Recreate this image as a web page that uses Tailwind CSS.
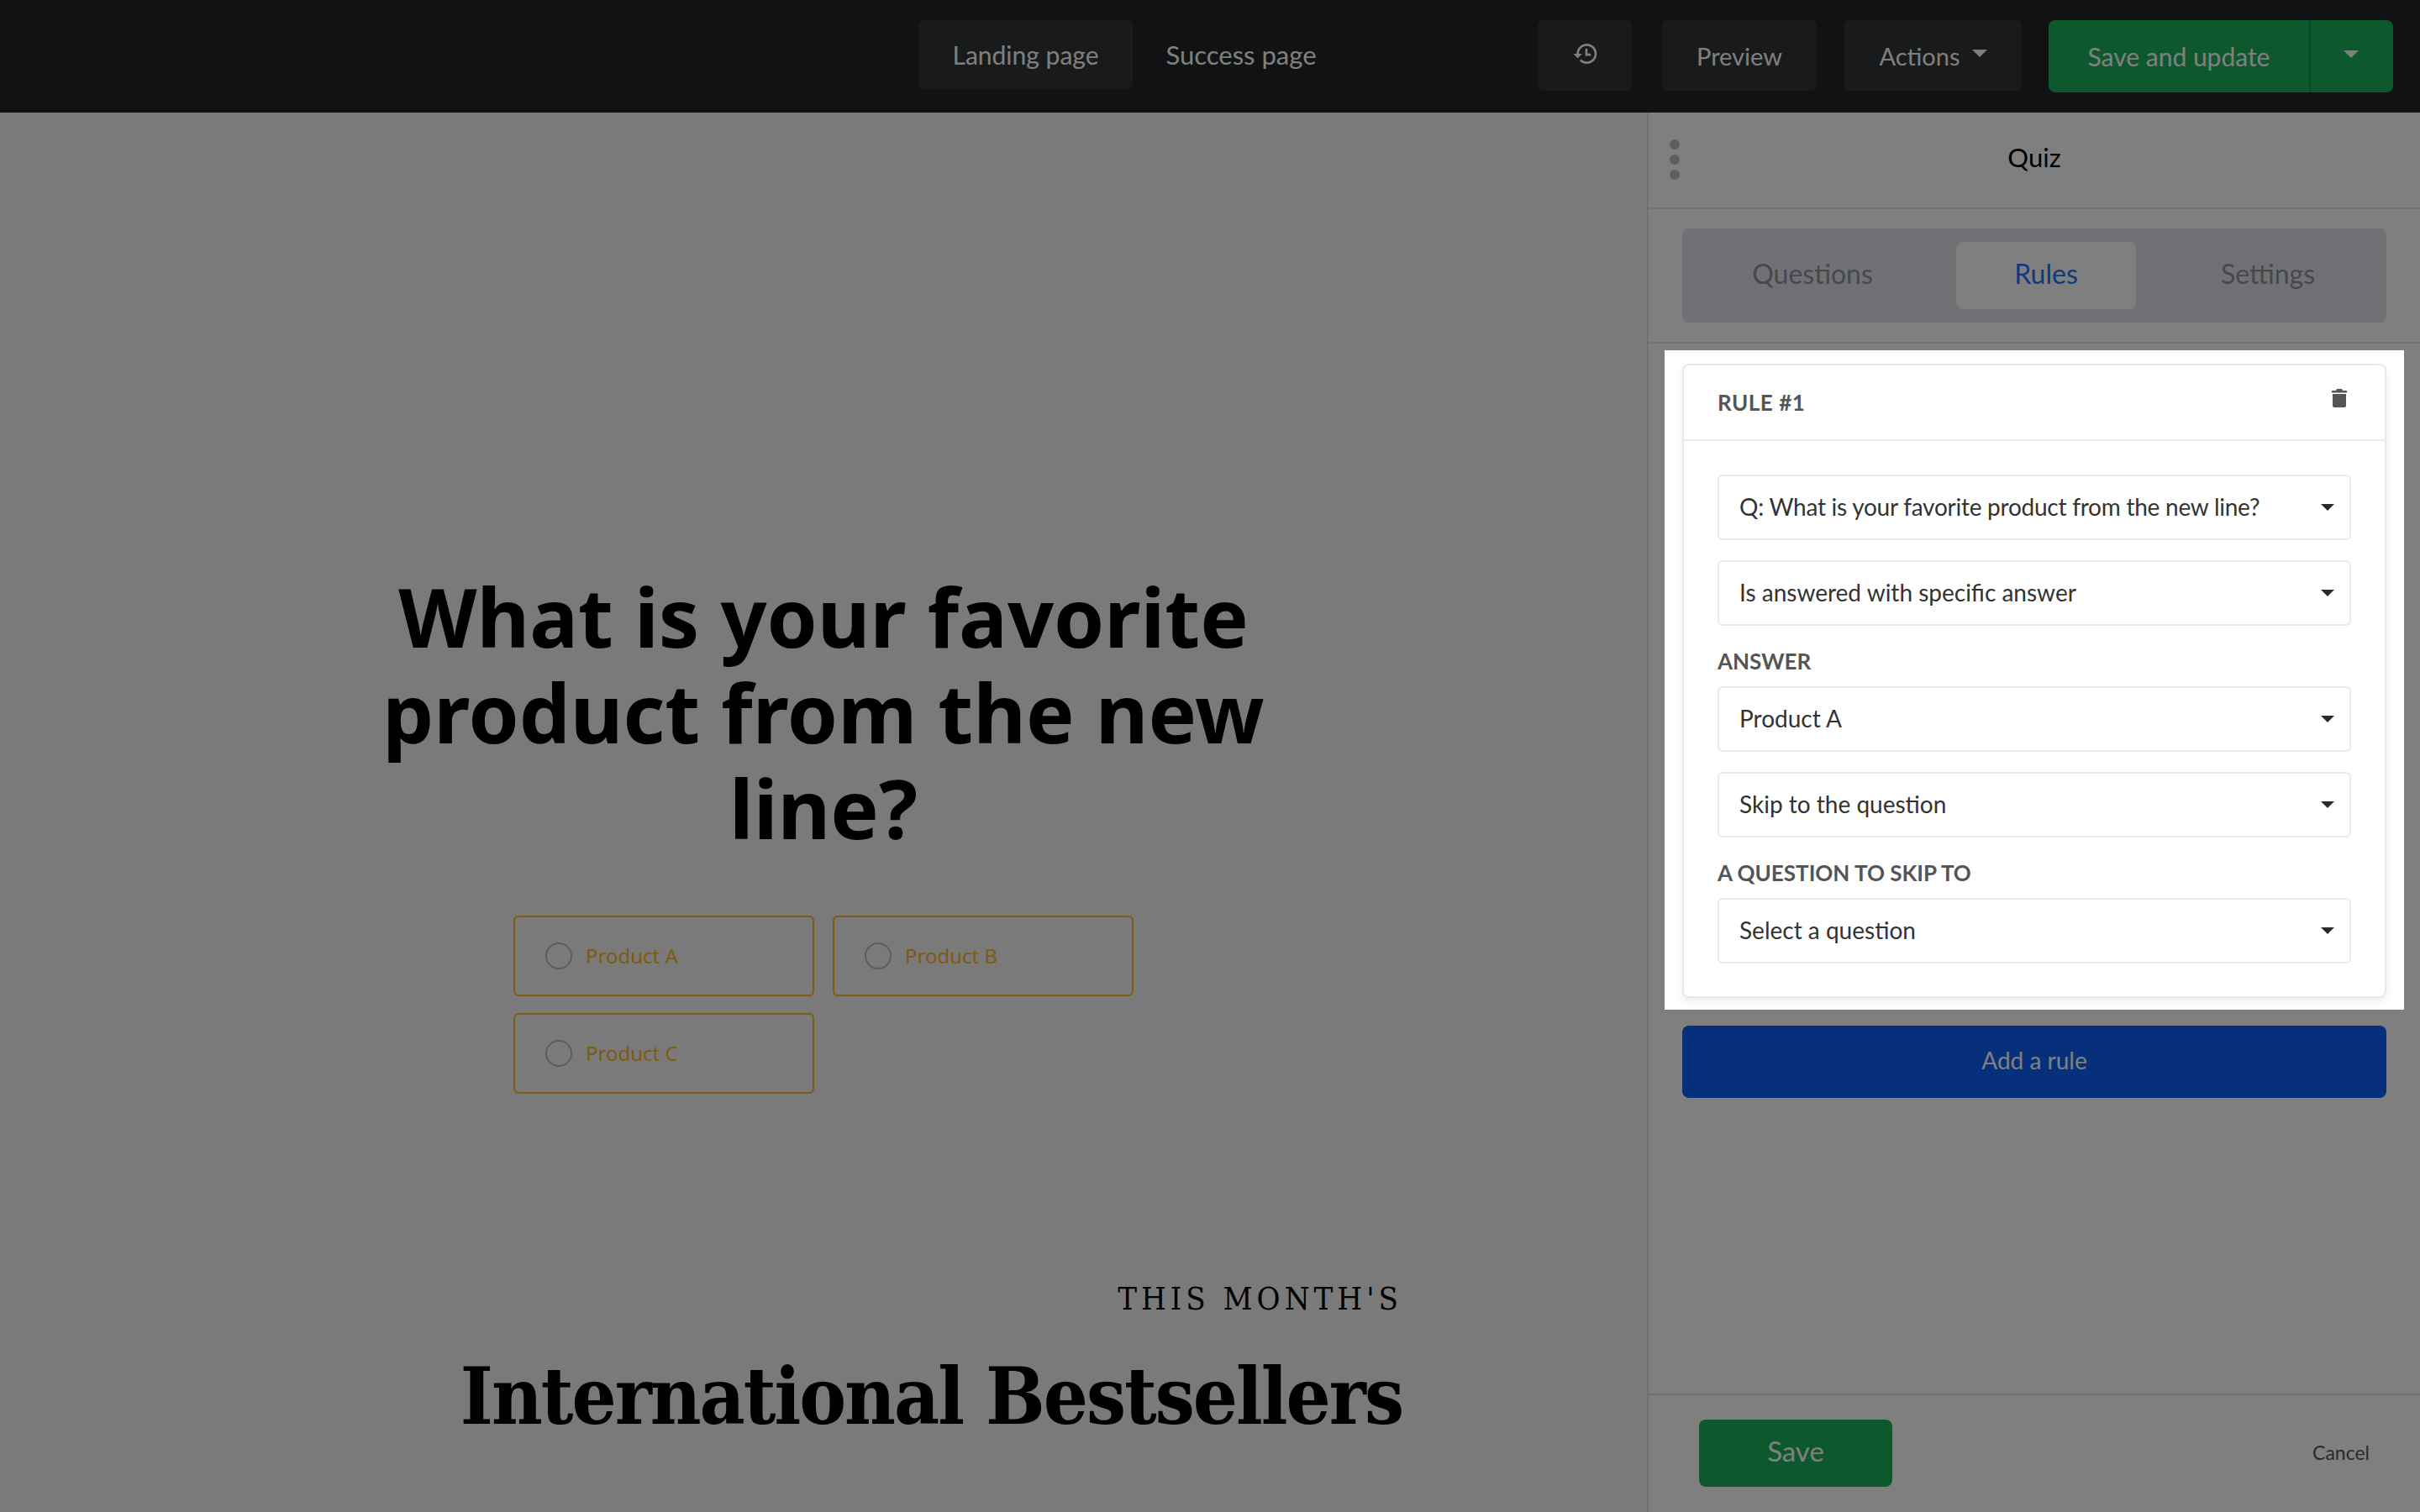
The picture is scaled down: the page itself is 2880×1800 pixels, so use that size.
<!DOCTYPE html>
<html lang="en">
<head>
  <meta charset="UTF-8">
  <title>Quiz rules</title>
  <script src="https://cdn.jsdelivr.net/npm/@tailwindcss/browser@4"></script>
</head>
<body class="font-[Lato,sans-serif] bg-white">
<div class="relative w-[2880px] h-[1800px] overflow-hidden flex flex-col">

  <!-- Top bar -->
  <header class="h-[134px] shrink-0 bg-[#202428] flex items-start pt-6 pl-[1093px] pr-8 text-[29px] text-white">
    <button class="w-[255px] h-[82px] rounded-md bg-[#323436] text-[30px]">Landing page</button>
    <button class="w-[258px] h-[82px] text-[31px]">Success page</button>
    <div class="flex-1"></div>
    <button class="w-[112px] h-[84px] rounded-md bg-[#323436] flex items-center justify-center pb-1 pl-0.5">
      <svg class="w-8 h-8" viewBox="0 0 24 24" fill="currentColor"><path d="M13 3a9 9 0 0 0-9 9H1l3.9 3.9.1.1L9 12H6c0-3.9 3.1-7 7-7s7 3.100 7 7-3.100 7-7 7c-1.900 0-3.700-.8-4.900-2.100l-1.500 1.500A9 9 0 0 0 13 21a9 9 0 0 0 0-18zm-1.300 4.500v6.300h5v-2h-3V7.500h-2z"/></svg>
    </button>
    <button class="w-[184px] h-[84px] ml-9 rounded-md bg-[#323436] pt-0.5">Preview</button>
    <button class="w-[211px] h-[84px] ml-[33px] rounded-md bg-[#323436] flex items-center justify-center gap-[14px] pt-0.5">
      Actions
      <svg class="w-[18px] h-[9px] mb-2" viewBox="0 0 18 9" fill="currentColor"><path d="M0 0h18L9 9z"/></svg>
    </button>
    <div class="w-[410px] h-[86px] ml-8 rounded-lg bg-[#1ab25a] flex">
      <button class="w-[312px] border-r-2 border-[#15924a] text-[30px]">Save and update</button>
      <button class="flex-1 flex items-center justify-center pb-1.5 pr-0.5">
        <svg class="w-[18px] h-[9px]" viewBox="0 0 18 9" fill="currentColor"><path d="M0 0h18L9 9z"/></svg>
      </button>
    </div>
  </header>

  <div class="flex flex-1 min-h-0">
    <!-- Page preview -->
    <main class="w-[1960px] shrink-0 bg-[#f5f5f5] pt-[543px] flex flex-col items-center">
      <h1 class="w-[1140px] text-center text-black font-['Noto_Sans',sans-serif] font-bold text-[96.5px] leading-[114px]">What is your favorite product from the new line?</h1>
      <div class="w-[738px] mt-[71px] grid grid-cols-2 gap-x-[22px] gap-y-5 font-['Noto_Sans',sans-serif] text-[24px] text-[#ffb420]">
        <label class="h-24 rounded-md border-2 border-[#ffb420] flex items-center pl-[36px] gap-[16px]"><span class="w-8 h-8 rounded-full border-2 border-[#b8b8b8]"></span>Product A</label>
        <label class="h-24 rounded-md border-2 border-[#ffb420] flex items-center pl-[36px] gap-[16px]"><span class="w-8 h-8 rounded-full border-2 border-[#b8b8b8]"></span>Product B</label>
        <label class="h-24 rounded-md border-2 border-[#ffb420] flex items-center pl-[36px] gap-[16px]"><span class="w-8 h-8 rounded-full border-2 border-[#b8b8b8]"></span>Product C</label>
      </div>
      <div class="self-end pr-[291px] mt-[221px] flex flex-col items-end text-black font-['DejaVu_Serif_Condensed','DejaVu_Serif',serif]">
        <p class="text-[38px] leading-[46px] tracking-[5px]">THIS MONTH'S</p>
        <h2 class="mt-[39px] text-[93px] leading-[110px] font-bold tracking-[-2px]">International Bestsellers</h2>
      </div>
    </main>

    <!-- Quiz sidebar -->
    <aside class="w-[920px] bg-white border-l-2 border-[#dfe2ea] flex flex-col">
      <div class="relative h-[113px] shrink-0 flex items-center justify-center text-[31px] text-black">
        <div class="absolute left-[25px] top-[32px] flex flex-col gap-[6px]">
          <span class="w-3 h-3 rounded-full bg-[#bdbdbd]"></span>
          <span class="w-3 h-3 rounded-full bg-[#bdbdbd]"></span>
          <span class="w-3 h-3 rounded-full bg-[#bdbdbd]"></span>
        </div>
        <span class="pb-[6px]">Quiz</span>
      </div>
      <div class="shrink-0 border-t-2 border-b-2 border-[#dfe2ea] py-[23px] px-10">
        <div class="h-28 rounded-lg bg-[#dfe2ea] flex items-center gap-8 px-4 text-[32px] text-[#8f9197]">
          <button class="w-[278px] h-20 pb-1">Questions</button>
          <button class="w-[214px] h-20 pb-1 rounded-lg bg-white text-[#1b74ff]">Rules</button>
          <button class="w-[250px] h-20 pb-1">Settings</button>
        </div>
      </div>

      <div class="px-10 pt-[24px] flex flex-col">
        <section class="h-[755px] rounded-lg border-2 border-[#e8e8f0] bg-white shadow-[0_4px_10px_rgba(0,0,0,0.08)]">
          <div class="h-[90px] border-b-2 border-[#e8e8f0] flex items-center justify-between pl-[40px] pr-[45px]">
            <span class="font-bold text-[26px] text-[#555555] tracking-[0.5px]">RULE #1</span>
            <svg class="w-[18px] h-[22px] mb-[10px]" viewBox="0 0 18 22" fill="#555555"><path d="M6 0h6l1 2h5v2.500H0V2h5zM1 6h16v14a2 2 0 0 1-2 2H3a2 2 0 0 1-2-2z"/></svg>
          </div>
          <div class="px-10 pt-10 flex flex-col text-[28px] text-[#333333]">
            <div class="h-[78px] rounded-md border-2 border-[#e8e8f0] flex items-center justify-between pl-6 pr-[18px]"><span class="pb-0.5 tracking-[-0.25px]">Q: What is your favorite product from the new line?</span><svg class="w-4 h-2" viewBox="0 0 16 8" fill="#2a2a2a"><path d="M0 0h16L8 8z"/></svg></div>
            <div class="h-[78px] mt-6 rounded-md border-2 border-[#e8e8f0] flex items-center justify-between pl-6 pr-[18px]"><span class="pb-0.5">Is answered with specific answer</span><svg class="w-4 h-2" viewBox="0 0 16 8" fill="#2a2a2a"><path d="M0 0h16L8 8z"/></svg></div>
            <label class="mt-[27px] h-[30px] font-bold text-[26px] leading-[30px] text-[#555555]">ANSWER</label>
            <div class="h-[78px] mt-[15px] rounded-md border-2 border-[#e8e8f0] flex items-center justify-between pl-6 pr-[18px]"><span class="pb-0.5">Product A</span><svg class="w-4 h-2" viewBox="0 0 16 8" fill="#2a2a2a"><path d="M0 0h16L8 8z"/></svg></div>
            <div class="h-[78px] mt-6 rounded-md border-2 border-[#e8e8f0] flex items-center justify-between pl-6 pr-[18px]"><span class="pb-0.5">Skip to the question</span><svg class="w-4 h-2" viewBox="0 0 16 8" fill="#2a2a2a"><path d="M0 0h16L8 8z"/></svg></div>
            <label class="mt-[27px] h-[30px] font-bold text-[26px] leading-[30px] text-[#555555]">A QUESTION TO SKIP TO</label>
            <div class="h-[78px] mt-[15px] rounded-md border-2 border-[#e8e8f0] flex items-center justify-between pl-6 pr-[18px]"><span class="pb-0.5">Select a question</span><svg class="w-4 h-2" viewBox="0 0 16 8" fill="#2a2a2a"><path d="M0 0h16L8 8z"/></svg></div>
          </div>
        </section>
        <button class="h-[86px] mt-[33px] pb-1 rounded-lg bg-[#0c60f8] text-white text-[28px]">Add a rule</button>
      </div>

      <div class="mt-auto h-[141px] border-t-2 border-[#dfe2ea] flex items-start justify-between pt-[29px] pl-[60px] pr-[60px]">
        <button class="w-[230px] h-20 pb-1 rounded-lg bg-[#1ab25a] text-white text-[33px]">Save</button>
        <button class="h-20 pb-0.5 text-[23px] text-[#555555]">Cancel</button>
      </div>
    </aside>
  </div>

  <!-- Dim overlay with a cut-out around the rule card -->
  <div class="absolute left-[1981px] top-[417px] w-[880px] h-[785px] shadow-[0_0_0_4000px_rgba(0,0,0,0.5)]"></div>
</div>
</body>
</html>
